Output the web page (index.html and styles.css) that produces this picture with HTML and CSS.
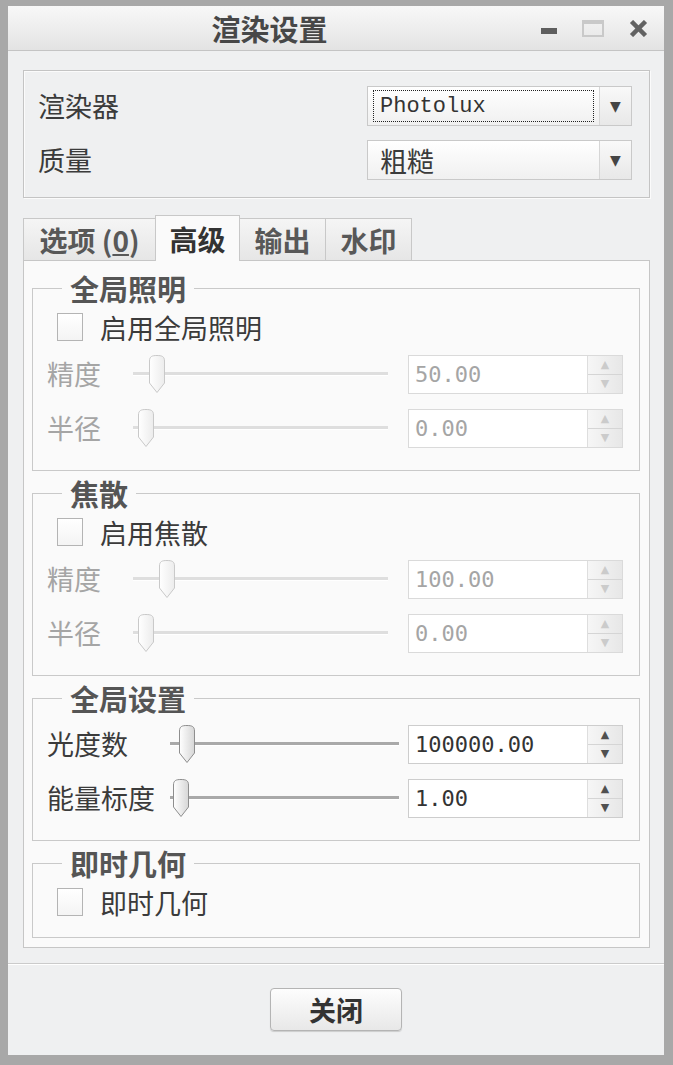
FILE: index.html
```html
<!DOCTYPE html>
<html lang="zh-CN">
<head>
    <meta charset="UTF-8">
    <title>渲染设置</title>
    <link rel="stylesheet" href="styles.css">
</head>
<body>
<svg class="defs" aria-hidden="true">
    <defs>
        <linearGradient id="thumbOn" x1="0" x2="1" y1="0" y2="0">
            <stop offset="0" stop-color="#ffffff"/>
            <stop offset="1" stop-color="#d6d6d6"/>
        </linearGradient>
        <linearGradient id="thumbOff" x1="0" x2="1" y1="0" y2="0">
            <stop offset="0" stop-color="#ffffff"/>
            <stop offset="1" stop-color="#ececec"/>
        </linearGradient>
    </defs>
</svg>

<div class="window">
    <div class="titlebar">
        <div class="title">渲染设置</div>
        <div class="winbtns">
            <span class="btn-min"></span>
            <span class="btn-max"></span>
            <svg class="btn-close" width="19" height="17" viewBox="0 0 19 17">
                <path d="M2.5 1.5 L16.5 15.5 M16.5 1.5 L2.5 15.5" stroke="#626262" stroke-width="4.5" fill="none"/>
            </svg>
        </div>
    </div>

    <div class="content">
        <!-- renderer / quality -->
        <div class="top-group">
            <div class="combo-row">
                <span class="label">渲染器</span>
                <div class="combo">
                    <div class="combo-value"><span class="focus mono">Photolux</span></div>
                    <div class="combo-arrow">▼</div>
                </div>
            </div>
            <div class="combo-row">
                <span class="label">质量</span>
                <div class="combo">
                    <div class="combo-value plain">粗糙</div>
                    <div class="combo-arrow">▼</div>
                </div>
            </div>
        </div>

        <div class="tabs">
            <div class="tab tab-options">选项 (<u>0</u>)</div>
            <div class="tab tab-active">高级</div>
            <div class="tab">输出</div>
            <div class="tab">水印</div>
        </div>

        <div class="panel">
            <fieldset class="group">
                <legend>全局照明</legend>
                <div class="check-row"><span class="checkbox"></span><span>启用全局照明</span></div>
                <div class="slider-row disabled">
                    <span class="label">精度</span>
                    <div class="slider">
                        <span class="track"></span>
                        <svg class="thumb" style="left:14px" width="20" height="40" viewBox="0 0 20 40"><path d="M2.5 7 C2.5 2.5 5 1.5 10 1.5 C15 1.5 17.5 2.5 17.5 7 L17.5 29 L10 38.5 L2.5 29 Z" fill="url(#thumbOff)" stroke="#c9c9c9"/></svg>
                    </div>
                    <div class="spin"><span class="spin-value">50.00</span><span class="spin-arrows"><span>▲</span><span>▼</span></span></div>
                </div>
                <div class="slider-row disabled">
                    <span class="label">半径</span>
                    <div class="slider">
                        <span class="track"></span>
                        <svg class="thumb" style="left:3px" width="20" height="40" viewBox="0 0 20 40"><path d="M2.5 7 C2.5 2.5 5 1.5 10 1.5 C15 1.5 17.5 2.5 17.5 7 L17.5 29 L10 38.5 L2.5 29 Z" fill="url(#thumbOff)" stroke="#c9c9c9"/></svg>
                    </div>
                    <div class="spin"><span class="spin-value">0.00</span><span class="spin-arrows"><span>▲</span><span>▼</span></span></div>
                </div>
            </fieldset>

            <fieldset class="group">
                <legend>焦散</legend>
                <div class="check-row"><span class="checkbox"></span><span>启用焦散</span></div>
                <div class="slider-row disabled">
                    <span class="label">精度</span>
                    <div class="slider">
                        <span class="track"></span>
                        <svg class="thumb" style="left:24px" width="20" height="40" viewBox="0 0 20 40"><path d="M2.5 7 C2.5 2.5 5 1.5 10 1.5 C15 1.5 17.5 2.5 17.5 7 L17.5 29 L10 38.5 L2.5 29 Z" fill="url(#thumbOff)" stroke="#c9c9c9"/></svg>
                    </div>
                    <div class="spin"><span class="spin-value">100.00</span><span class="spin-arrows"><span>▲</span><span>▼</span></span></div>
                </div>
                <div class="slider-row disabled">
                    <span class="label">半径</span>
                    <div class="slider">
                        <span class="track"></span>
                        <svg class="thumb" style="left:3px" width="20" height="40" viewBox="0 0 20 40"><path d="M2.5 7 C2.5 2.5 5 1.5 10 1.5 C15 1.5 17.5 2.5 17.5 7 L17.5 29 L10 38.5 L2.5 29 Z" fill="url(#thumbOff)" stroke="#c9c9c9"/></svg>
                    </div>
                    <div class="spin"><span class="spin-value">0.00</span><span class="spin-arrows"><span>▲</span><span>▼</span></span></div>
                </div>
            </fieldset>

            <fieldset class="group">
                <legend>全局设置</legend>
                <div class="slider-row wide">
                    <span class="label">光度数</span>
                    <div class="slider">
                        <span class="track"></span>
                        <svg class="thumb" style="left:7px" width="20" height="40" viewBox="0 0 20 40"><path d="M2.5 7 C2.5 2.5 5 1.5 10 1.5 C15 1.5 17.5 2.5 17.5 7 L17.5 29 L10 38.5 L2.5 29 Z" fill="url(#thumbOn)" stroke="#8e8e8e"/></svg>
                    </div>
                    <div class="spin"><span class="spin-value">100000.00</span><span class="spin-arrows"><span>▲</span><span>▼</span></span></div>
                </div>
                <div class="slider-row wide">
                    <span class="label">能量标度</span>
                    <div class="slider">
                        <span class="track"></span>
                        <svg class="thumb" style="left:1px" width="20" height="40" viewBox="0 0 20 40"><path d="M2.5 7 C2.5 2.5 5 1.5 10 1.5 C15 1.5 17.5 2.5 17.5 7 L17.5 29 L10 38.5 L2.5 29 Z" fill="url(#thumbOn)" stroke="#8e8e8e"/></svg>
                    </div>
                    <div class="spin"><span class="spin-value">1.00</span><span class="spin-arrows"><span>▲</span><span>▼</span></span></div>
                </div>
            </fieldset>

            <fieldset class="group">
                <legend>即时几何</legend>
                <div class="check-row"><span class="checkbox"></span><span>即时几何</span></div>
            </fieldset>
        </div>
    </div>

    <div class="footer">
        <button class="close-btn">关闭</button>
    </div>
</div>
</body>
</html>
```

FILE: styles.css
```css
* {
    box-sizing: border-box;
}

body {
    margin: 0;
    font-family: "Noto Sans CJK SC", "Noto Sans", sans-serif;
    color: #3b3b3b;
    background: #a9a9a9;
}

.defs {
    position: absolute;
    width: 0;
    height: 0;
}

.window {
    width: 673px;
    height: 1065px;
    display: flex;
    flex-direction: column;
    background: #eff0f1;
    border-style: solid;
    border-color: #a8a8a8;
    border-width: 6px 9px 10px 8px;
}

/* title bar */
.titlebar {
    height: 45px;
    display: flex;
    align-items: center;
    background: linear-gradient(#f8f8f8, #e3e3e3);
    border-bottom: 1px solid #c4c4c4;
}

.title {
    flex: 1;
    text-align: center;
    padding-right: 10px;
    font-size: 29px;
    font-weight: bold;
    line-height: 44px;
    color: #474747;
}

.winbtns {
    display: flex;
    align-items: center;
    gap: 25px;
    padding-right: 16px;
}

.btn-min {
    width: 16px;
    height: 6px;
    margin-top: 6px;
    background: #5e5e5e;
}

.btn-max {
    width: 22px;
    height: 17px;
    border: 2px solid #c9c9c9;
    border-top-width: 4px;
}

/* main area */
.content {
    padding: 19px 14px 15px 15px;
}

.top-group {
    display: flex;
    flex-direction: column;
    gap: 14px;
    padding: 15px 17px 17px 14px;
    border: 1px solid #c4c4c4;
    box-shadow: inset 1px 1px 0 #fbfbfb, 1px 1px 0 #fbfbfb;
}

.combo-row {
    height: 40px;
    display: flex;
    align-items: center;
    justify-content: space-between;
}

.label {
    font-size: 27px;
    line-height: 30px;
    white-space: nowrap;
}

.combo {
    width: 265px;
    height: 40px;
    display: flex;
    border: 1px solid #c9c9c9;
    background: linear-gradient(#ffffff, #f0f0f0);
}

.combo-value {
    flex: 1;
    display: flex;
    padding: 3px 5px;
}

.combo-value.plain {
    align-items: center;
    padding-left: 12px;
    font-size: 27px;
}

.focus {
    flex: 1;
    display: flex;
    align-items: center;
    padding-left: 6px;
    border: 1px dotted #222;
}

.mono {
    font-family: "Liberation Mono", monospace;
    font-size: 22px;
    color: #333;
}

.combo-arrow {
    width: 32px;
    display: flex;
    align-items: center;
    justify-content: center;
    border-left: 1px solid #d6d6d6;
    background: linear-gradient(#f9f9f9, #e8e8e8);
    font-family: "DejaVu Sans", sans-serif;
    font-size: 14px;
    color: #454545;
}

/* tabs */
.tabs {
    display: flex;
    align-items: flex-end;
    margin-top: 17px;
}

.tab {
    width: 87px;
    height: 42px;
    display: flex;
    align-items: center;
    justify-content: center;
    border: 1px solid #c8c8c8;
    border-bottom: none;
    background: linear-gradient(#f5f5f5, #e6e6e6);
    font-size: 28px;
    font-weight: bold;
    line-height: 1;
    color: #585858;
}

.tab + .tab {
    margin-left: -1px;
}

.tab-options {
    width: 133px;
}

.tab-active {
    position: relative;
    width: 85px;
    height: 46px;
    margin-bottom: -1px;
    background: #fafafa;
    color: #333;
}

.panel {
    padding: 13px 9px 9px 8px;
    border: 1px solid #c6c6c6;
    background: #fafafa;
}

/* group boxes */
.group {
    margin: 0;
    min-width: 0;
    padding: 5px 16px 15px 14px;
    border: 1px solid #c9c9c9;
}

.group + .group {
    margin-top: 8px;
}

.group legend {
    margin-left: 15px;
    padding: 0 8px;
    font-size: 29px;
    font-weight: bold;
    line-height: 28px;
    color: #555;
}

.check-row {
    height: 40px;
    display: flex;
    align-items: center;
    gap: 17px;
    padding-left: 10px;
    font-size: 27px;
}

.checkbox {
    width: 26px;
    height: 28px;
    border: 1px solid #b4b4b4;
    background: linear-gradient(#ffffff, #f4f4f4);
}

.slider-row {
    height: 54px;
    display: grid;
    grid-template-columns: 66px 1fr 215px;
    column-gap: 20px;
    align-items: center;
}

.slider-row.wide {
    grid-template-columns: 114px 1fr 215px;
    column-gap: 9px;
}

.slider {
    position: relative;
    height: 40px;
}

.track {
    position: absolute;
    left: 0;
    right: 0;
    top: 18px;
    height: 4px;
    background: #a9a9a9;
    border-bottom: 1px solid #fff;
}

.thumb {
    position: absolute;
    top: 0;
}

.spin {
    height: 39px;
    display: flex;
    border: 1px solid #cdcdcd;
    background: #fff;
}

.spin-value {
    flex: 1;
    display: flex;
    align-items: center;
    padding-left: 6px;
    font-family: "DejaVu Sans Mono", monospace;
    font-size: 22px;
    color: #333;
}

.spin-arrows {
    width: 35px;
    display: flex;
    flex-direction: column;
    border-left: 1px solid #dedede;
    background: linear-gradient(90deg, #f6f6f6, #e7e7e7);
}

.spin-arrows span {
    flex: 1;
    display: flex;
    align-items: center;
    justify-content: center;
    font-family: "DejaVu Sans", sans-serif;
    font-size: 11px;
    color: #505050;
}

.spin-arrows span + span {
    border-top: 1px solid #d5d5d5;
}

.disabled .label,
.disabled .spin-value {
    color: #a5a5a5;
}

.disabled .track {
    background: #dedede;
}

.disabled .spin {
    border-color: #dadada;
}

.disabled .spin-arrows span {
    color: #cbcbcb;
}

/* bottom bar */
.footer {
    flex: 1;
    display: flex;
    justify-content: center;
    align-items: flex-start;
    padding-top: 24px;
    border-top: 1px solid #cbcbcb;
    box-shadow: inset 0 1px 0 #fff;
}

.close-btn {
    width: 132px;
    height: 43px;
    border: 1px solid #b4b4b4;
    border-radius: 4px;
    background: linear-gradient(#fdfdfd, #e8e8e8);
    box-shadow: 0 1px 1px rgba(0, 0, 0, 0.15);
    font-family: inherit;
    font-size: 27px;
    font-weight: bold;
    line-height: 1;
    color: #333;
}
```
